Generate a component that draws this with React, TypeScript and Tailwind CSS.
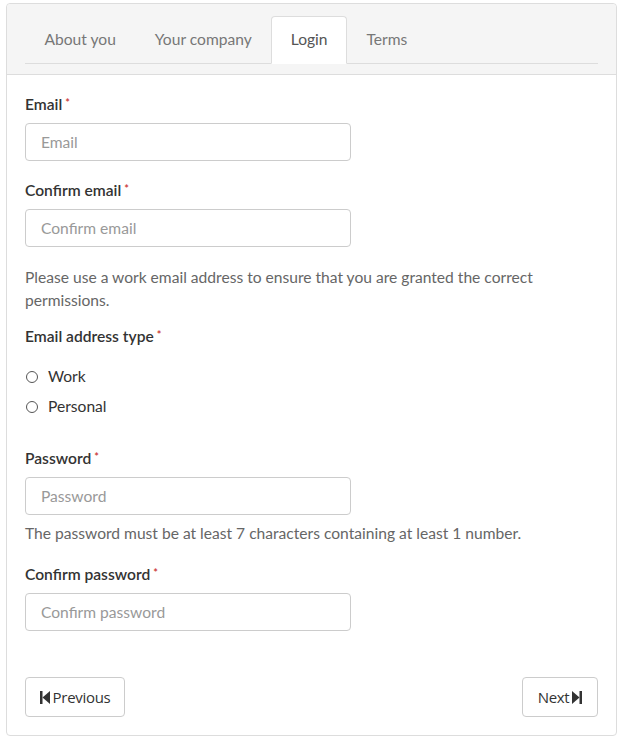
import { useState } from "react";

const tabs = ["About you", "Your company", "Login", "Terms"];

function Req() {
  return <span className="relative -top-[3px] ml-[3px] text-[11px] leading-none text-[#c9302c]">*</span>;
}

function Label({ children }: { children: React.ReactNode }) {
  return (
    <label className="block text-[15.6px] leading-[20px] font-semibold text-[#333]">
      {children}
      <Req />
    </label>
  );
}

function TextInput({ placeholder, type = "text" }: { placeholder: string; type?: string }) {
  return (
    <input
      type={type}
      placeholder={placeholder}
      className="block h-[38px] w-[326px] rounded-[4px] border border-[#ccc] bg-white px-[15px] text-[15.6px] text-[#333] outline-none placeholder:text-[#999]"
    />
  );
}

function StepIcon({ dir }: { dir: "back" | "fwd" }) {
  return (
    <svg width="10" height="13" viewBox="0 0 10 13" className="inline-block">
      {dir === "back" ? (
        <>
          <rect x="0" y="0" width="2.5" height="13" fill="#333" />
          <path d="M2.5 6.5 L10 0 L10 13 Z" fill="#333" />
        </>
      ) : (
        <>
          <path d="M0 0 L7.5 6.5 L0 13 Z" fill="#333" />
          <rect x="7.5" y="0" width="2.5" height="13" fill="#333" />
        </>
      )}
    </svg>
  );
}

export default function App() {
  const [active, setActive] = useState("Login");
  const [emailType, setEmailType] = useState("");

  return (
    <div className="min-h-[742px] bg-white px-[6px] pt-[3px] font-['Lato',sans-serif]">
      <div className="rounded-[4px] border border-[#ddd]">
        <div className="h-[71px] rounded-t-[4px] border-b border-[#ddd] bg-[#f5f5f5] px-[18px] pt-[12px]">
          <ul className="flex border-b border-[#ddd]">
            {tabs.map((t) => (
              <li key={t} className="-mb-px">
                <button
                  onClick={() => setActive(t)}
                  className={
                    t === active
                      ? "h-[48px] rounded-t-[4px] border border-b-white border-[#ddd] bg-white px-[18.5px] text-[15.6px] text-[#555]"
                      : "h-[48px] border border-transparent px-[18.5px] text-[15.6px] text-[#777]"
                  }
                >
                  {t}
                </button>
              </li>
            ))}
          </ul>
        </div>

        <form className="px-[18px] pt-[19px] pb-[18px]" onSubmit={(e) => e.preventDefault()}>
          <Label>Email</Label>
          <div className="mt-[9px]">
            <TextInput placeholder="Email" type="email" />
          </div>

          <div className="mt-[19px]">
            <Label>Confirm email</Label>
          </div>
          <div className="mt-[9px]">
            <TextInput placeholder="Confirm email" type="email" />
          </div>

          <p className="mt-[19px] text-[15.6px] leading-[23px] text-[#666]">
            Please use a work email address to ensure that you are granted the correct permissions.
          </p>

          <div className="mt-[14px]">
            <Label>Email address type</Label>
          </div>
          <div className="mt-[16px] flex flex-col">
            {["Work", "Personal"].map((opt) => (
              <label key={opt} className="flex h-[30px] items-center gap-[10px] text-[15.6px] text-[#333]">
                <span
                  onClick={() => setEmailType(opt)}
                  className="ml-[1px] flex h-[12px] w-[12px] items-center justify-center rounded-full border border-[#555] bg-white"
                >
                  {emailType === opt && <span className="h-[6px] w-[6px] rounded-full bg-[#333]" />}
                </span>
                {opt}
              </label>
            ))}
          </div>

          <div className="mt-[26px]">
            <Label>Password</Label>
          </div>
          <div className="mt-[9px]">
            <TextInput placeholder="Password" type="password" />
          </div>
          <p className="mt-[7px] text-[15.6px] leading-[22px] text-[#666]">
            The password must be at least 7 characters containing at least 1 number.
          </p>

          <div className="mt-[20px]">
            <Label>Confirm password</Label>
          </div>
          <div className="mt-[9px]">
            <TextInput placeholder="Confirm password" type="password" />
          </div>

          <div className="mt-[46px] flex justify-between">
            <button
              type="button"
              className="flex h-[40px] w-[100px] items-center justify-center gap-[3px] rounded-[4px] border border-[#ccc] bg-white font-['Open_Sans',sans-serif] text-[15px] tracking-[-0.3px] text-[#333]"
            >
              <StepIcon dir="back" />
              Previous
            </button>
            <button
              type="button"
              className="flex h-[40px] w-[76px] items-center justify-center gap-[3px] rounded-[4px] border border-[#ccc] bg-white font-['Open_Sans',sans-serif] text-[15px] tracking-[-0.3px] text-[#333]"
            >
              Next
              <StepIcon dir="fwd" />
            </button>
          </div>
        </form>
      </div>
    </div>
  );
}
